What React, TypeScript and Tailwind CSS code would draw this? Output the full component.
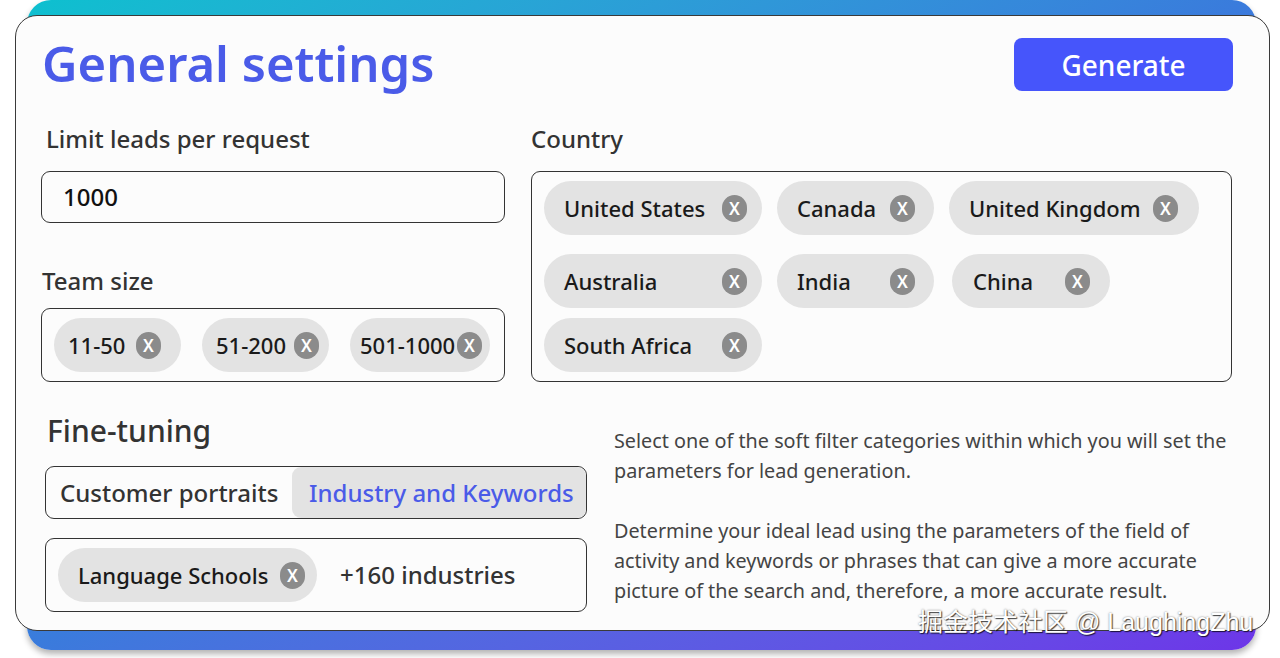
import React from "react";

const font = { fontFamily: '"Noto Sans", "Open Sans", sans-serif' };

function XDot() {
  return (
    <span className="flex h-[27px] w-[25px] shrink-0 items-center justify-center rounded-full bg-[#8b8b8b] text-[17px] font-semibold leading-none text-white">
      X
    </span>
  );
}

function Chip({ label, className }: { label: string; className: string }) {
  return (
    <div className={`flex h-[54px] items-center justify-between rounded-full bg-[#e3e3e3] font-medium text-[#1a1a1a] ${className}`}>
      <span className="whitespace-nowrap">{label}</span>
      <XDot />
    </div>
  );
}

export default function App() {
  return (
    <div className="relative h-[658px] w-[1280px] overflow-hidden bg-white" style={font}>
      <div className="ml-[27px] h-[650px] w-[1229px] rounded-[24px] bg-linear-to-br from-[#0cc0cf] via-[#3a7bdc] to-[#6d35e8] pt-[15px] shadow-[0_4px_6px_rgba(0,0,0,0.3)]">
        <div className="-ml-[12px] h-[616px] w-[1255px] rounded-[22px] border border-[#3a3a3a] bg-[#fcfcfc] pl-[25px] pr-[36px]">
          {/* header */}
          <div className="flex items-start justify-between pt-[17px]">
            <h1 className="pl-[1px] text-[49px] font-semibold leading-[60px] text-[#4a5be8]">General settings</h1>
            <button className="mt-[5px] h-[53px] w-[219px] rounded-[8px] bg-[#4655fb] text-[28px] font-medium text-white">
              Generate
            </button>
          </div>

          {/* general fields */}
          <div className="mt-[31px] flex gap-[26px]">
            <div className="w-[464px]">
              <div className="pl-[5px] text-[24px] font-medium leading-[30px] text-[#333]">Limit leads per request</div>
              <div className="mt-[17px] flex h-[52px] items-center rounded-[9px] border border-[#333] px-[21px] text-[24px] font-medium text-[#111]">
                1000
              </div>
              <div className="mt-[43px] pl-[1px] text-[24px] font-medium leading-[30px] text-[#333]">Team size</div>
              <div className="mt-[12px] flex h-[74px] items-center gap-[21px] rounded-[9px] border border-[#333] px-[12px] text-[22px]">
                <Chip label="11-50" className="w-[127px] pl-[14px] pr-[20px]" />
                <Chip label="51-200" className="w-[127px] pl-[14px] pr-[10px]" />
                <Chip label="501-1000" className="w-[140px] pl-[10px] pr-[8px]" />
              </div>
            </div>
            <div className="w-[701px]">
              <div className="text-[24px] font-medium leading-[30px] text-[#333]">Country</div>
              <div className="mt-[17px] h-[211px] rounded-[9px] border border-[#333] px-[12px] pt-[9px] text-[22px]">
                <div className="flex gap-[15px]">
                  <Chip label="United States" className="w-[218px] pl-[20px] pr-[15px]" />
                  <Chip label="Canada" className="w-[157px] pl-[20px] pr-[19px]" />
                  <Chip label="United Kingdom" className="w-[250px] pl-[20px] pr-[21px]" />
                </div>
                <div className="mt-[19px] flex gap-[15px]">
                  <Chip label="Australia" className="w-[218px] pl-[20px] pr-[15px]" />
                  <Chip label="India" className="w-[157px] pl-[20px] pr-[19px]" />
                  <Chip label="China" className="ml-[3px] w-[158px] pl-[21px] pr-[20px]" />
                </div>
                <div className="mt-[10px] flex">
                  <Chip label="South Africa" className="w-[218px] pl-[20px] pr-[15px]" />
                </div>
              </div>
            </div>
          </div>

          {/* fine-tuning */}
          <div className="mt-[31px] flex gap-[27px] pl-[4px]">
            <div className="w-[542px]">
              <div className="pl-[2px] text-[30px] font-medium leading-[36px] text-[#333]">Fine-tuning</div>
              <div className="mt-[17px] flex h-[53px] items-stretch rounded-[9px] border border-[#333] text-[24px] font-medium">
                <div className="flex w-[246px] items-center whitespace-nowrap px-[14px] text-[#333]">Customer portraits</div>
                <div className="flex flex-1 items-center whitespace-nowrap rounded-[9px] bg-[#e3e3e3] pl-[17px] text-[#4a5be8]">
                  Industry and Keywords
                </div>
              </div>
              <div className="mt-[19px] flex h-[74px] items-center gap-[23px] rounded-[9px] border border-[#333] px-[12px] text-[22px]">
                <Chip label="Language Schools" className="w-[259px] pl-[20px] pr-[12px]" />
                <span className="text-[24px] font-medium text-[#333]">+160 industries</span>
              </div>
            </div>
            <div className="flex-1 pt-[13px] text-[19.8px] leading-[30px] text-[#444]">
              <p>Select one of the soft filter categories within which you will set the parameters for lead generation.</p>
              <p className="mt-[30px]">
                Determine your ideal lead using the parameters of the field of activity and keywords or phrases that can give a more
                accurate picture of the search and, therefore, a more accurate result.
              </p>
            </div>
          </div>
        </div>
      </div>

      <div
        className="absolute left-[918px] top-[606px] whitespace-nowrap text-[25px] leading-[32px] text-white [text-shadow:1px_1px_1px_rgba(0,0,0,0.7),0_0_2px_rgba(0,0,0,0.5)]"
        style={{ fontFamily: '"Liberation Sans", "Noto Sans CJK SC", sans-serif' }}
      >
        掘金技术社区 @ LaughingZhu
      </div>
    </div>
  );
}
